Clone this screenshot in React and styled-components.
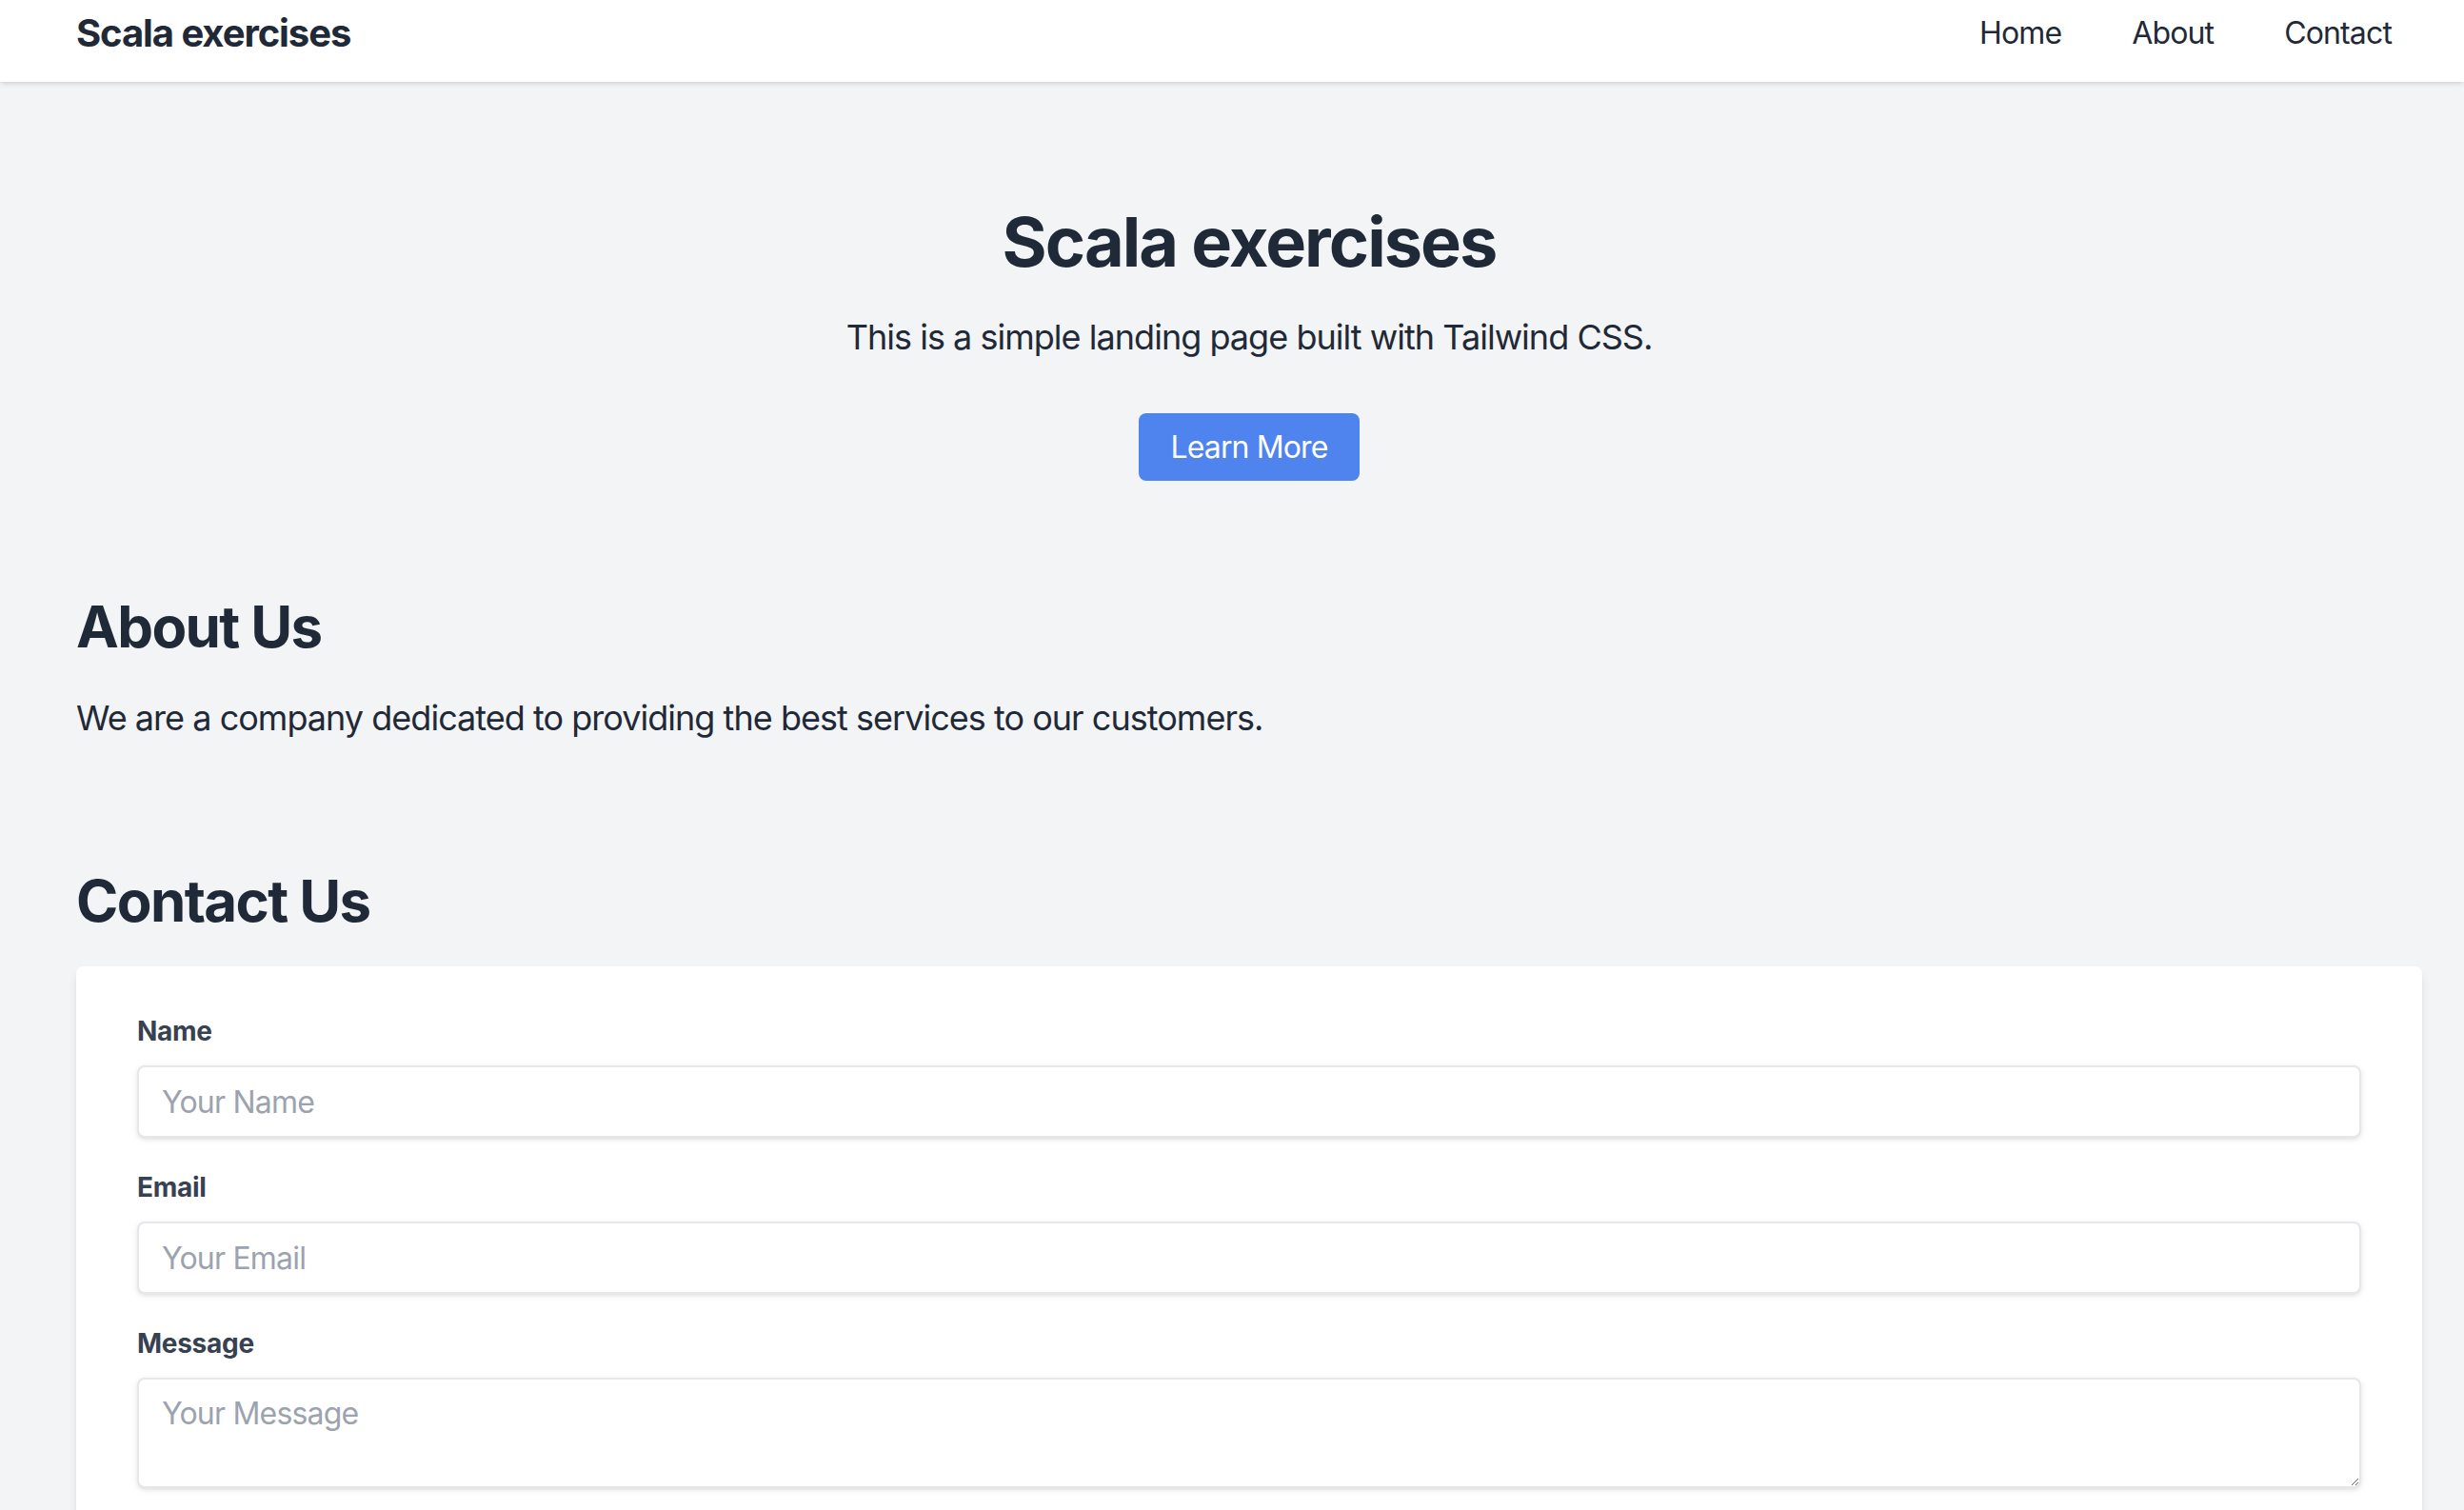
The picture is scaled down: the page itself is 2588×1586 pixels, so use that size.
import React from "react";
import styled, { createGlobalStyle } from "styled-components";

const GlobalStyle = createGlobalStyle`
  *, *::before, *::after {
    box-sizing: border-box;
    letter-spacing: -0.027em;
  }
  html, body {
    margin: 0;
    padding: 0;
    background: #f3f4f6;
    font-family: Inter, "Noto Sans", "Liberation Sans", sans-serif;
    color: #1f2937;
  }
`;

const Header = styled.header`
  background: #ffffff;
  box-shadow: 0 2px 6px 0 rgba(0, 0, 0, 0.1), 0 2px 4px -2px rgba(0, 0, 0, 0.1);
  height: 86px;
  padding: 7px 76px 23px 80px;
  display: flex;
  align-items: center;
  justify-content: space-between;
  position: relative;
  z-index: 1;
`;

const Logo = styled.div`
  font-size: 40px;
  line-height: 56px;
  font-weight: 700;
  color: #1f2937;
`;

const Nav = styled.nav`
  display: flex;
  align-items: center;
  gap: 74px;
`;

const NavLink = styled.a`
  font-size: 32px;
  line-height: 48px;
  color: #1f2937;
  text-decoration: none;
`;

const Main = styled.main`
  padding: 0 44px 0 80px;
`;

const Hero = styled.section`
  padding: 128px 0;
  text-align: center;
`;

const HeroTitle = styled.h1`
  margin: 0 0 32px;
  font-size: 72px;
  line-height: 80px;
  font-weight: 700;
  color: #1f2937;
`;

const Lead = styled.p`
  margin: 0;
  font-size: 36px;
  line-height: 56px;
  color: #1f2937;
`;

const ButtonLine = styled.div`
  margin-top: 64px;
  font-size: 32px;
  line-height: 48px;
`;

const PrimaryButton = styled.a`
  background: #4f83ee;
  color: #ffffff;
  padding: 16px 33px;
  border-radius: 8px;
  text-decoration: none;
  font-size: 32px;
`;

const Section = styled.section`
  padding-bottom: ${(p) => p.$bottom || 0}px;
`;

const SectionTitle = styled.h2`
  margin: 0 0 ${(p) => p.$gap || 32}px;
  font-size: 60px;
  line-height: 72px;
  font-weight: 700;
  color: #1f2937;
`;

const Card = styled.form`
  background: #ffffff;
  border-radius: 8px;
  box-shadow: 0 8px 12px -2px rgba(0, 0, 0, 0.1), 0 4px 8px -4px rgba(0, 0, 0, 0.1);
  padding: 48px 64px 64px;
`;

const Field = styled.div`
  margin-bottom: 32px;
`;

const Label = styled.label`
  display: block;
  font-size: 28px;
  line-height: 40px;
  font-weight: 700;
  letter-spacing: -0.01em;
  color: #374151;
  margin-bottom: 16px;
`;

const fieldStyles = `
  display: block;
  width: 100%;
  padding: 16px 24px;
  border: 2px solid #e5e7eb;
  border-radius: 8px;
  box-shadow: 0 2px 6px 0 rgba(0, 0, 0, 0.1), 0 2px 4px -2px rgba(0, 0, 0, 0.08);
  font-family: Inter, "Noto Sans", "Liberation Sans", sans-serif;
  font-size: 32px;
  line-height: 40px;
  letter-spacing: -0.025em;
  color: #374151;
  background: #ffffff;
  outline: none;
  &::placeholder { color: #9ca3af; }
`;

const Input = styled.input`
  ${fieldStyles}
  height: 76px;
`;

const TextArea = styled.textarea`
  ${fieldStyles}
  height: 116px;
  resize: vertical;
`;

const SubmitButton = styled.button`
  background: #4f83ee;
  color: #ffffff;
  border: none;
  border-radius: 8px;
  padding: 16px 32px;
  font-family: Inter, "Noto Sans", "Liberation Sans", sans-serif;
  font-size: 32px;
  font-weight: 700;
  line-height: 48px;
`;

export default function App() {
  return (
    <>
      <GlobalStyle />
      <Header>
        <Logo>Scala exercises</Logo>
        <Nav>
          <NavLink href="#">Home</NavLink>
          <NavLink href="#about">About</NavLink>
          <NavLink href="#contact">Contact</NavLink>
        </Nav>
      </Header>
      <Main>
        <Hero>
          <HeroTitle>Scala exercises</HeroTitle>
          <Lead>This is a simple landing page built with Tailwind CSS.</Lead>
          <ButtonLine>
            <PrimaryButton href="#about">Learn More</PrimaryButton>
          </ButtonLine>
        </Hero>
        <Section id="about" $bottom={128}>
          <SectionTitle>About Us</SectionTitle>
          <Lead>We are a company dedicated to providing the best services to our customers.</Lead>
        </Section>
        <Section id="contact" $bottom={64}>
          <SectionTitle $gap={33}>Contact Us</SectionTitle>
          <Card onSubmit={(e) => e.preventDefault()}>
            <Field>
              <Label htmlFor="name">Name</Label>
              <Input id="name" type="text" placeholder="Your Name" />
            </Field>
            <Field>
              <Label htmlFor="email">Email</Label>
              <Input id="email" type="email" placeholder="Your Email" />
            </Field>
            <Field>
              <Label htmlFor="message">Message</Label>
              <TextArea id="message" placeholder="Your Message" />
            </Field>
            <SubmitButton type="submit">Send</SubmitButton>
          </Card>
        </Section>
      </Main>
    </>
  );
}
